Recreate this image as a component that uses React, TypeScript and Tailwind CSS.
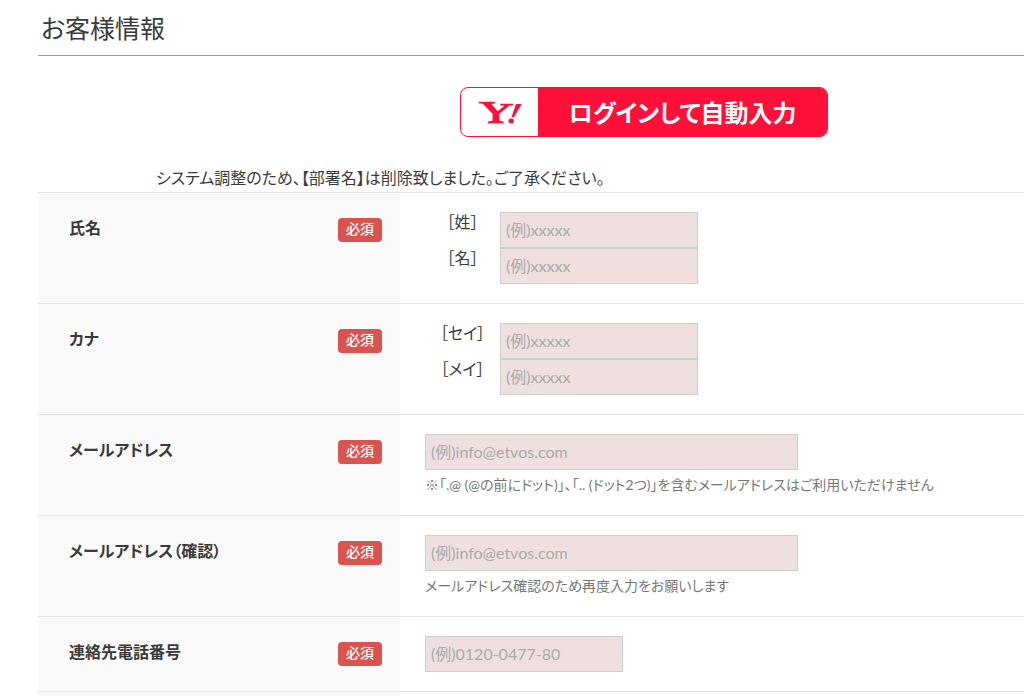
import type { ReactNode } from "react";

const inputClass =
  "block h-9 border border-[#ccc] bg-[#efdfdf] px-[5px] pb-0.5 text-base text-[#333] placeholder:text-[#aaa] outline-none";

function YahooMark() {
  return (
    <svg viewBox="0 0 130 68" className="h-[23px] w-11" fill="currentColor" aria-hidden="true">
      <path d="M2 2H50V7L40 9L58 30L78 14L66 13V8H104V12L92 14L63 38V58L76 61V66H29V61L43 58V38L14 8L2 7Z" />
      <path d="M112 9H129L106 48H99Z" />
      <ellipse cx="98" cy="59" rx="8" ry="7" />
    </svg>
  );
}

function Row({ label, htmlFor, children }: { label: string; htmlFor: string; children: ReactNode }) {
  return (
    <tr className="border-t border-[#e3e3e3]">
      <th scope="row" className="w-[362px] bg-[#f9f9f9] pt-[25px] pr-[18px] pl-[31px] text-left align-top font-bold">
        <div className="flex items-start justify-between">
          <label htmlFor={htmlFor} className="leading-5">
            {label}
          </label>
          <span className="h-6 w-11 rounded bg-[#d9534f] text-center text-sm leading-[22px] font-medium text-white">
            必須
          </span>
        </div>
      </th>
      <td className="py-[19px] pl-[25px] align-top">{children}</td>
    </tr>
  );
}

function NamePart({ id, label }: { id: string; label: string }) {
  return (
    <div className="flex">
      <label htmlFor={id} className="w-[75px] text-center leading-5">
        {label}
      </label>
      <input id={id} type="text" placeholder="(例)xxxxx" className={`${inputClass} w-[198px]`} />
    </div>
  );
}

function EmailField({ id, note }: { id: string; note: string }) {
  return (
    <>
      <input id={id} type="email" placeholder="(例)info@etvos.com" className={`${inputClass} w-[373px]`} />
      <p className="pt-1 text-sm leading-[22px] text-[#777]">{note}</p>
    </>
  );
}

export default function App() {
  return (
    <main className="overflow-hidden bg-white pl-[38px] font-[Lato,'Noto_Sans_CJK_JP',sans-serif] text-base text-[#3a3a3a] [font-feature-settings:'palt']">
      <h1 className="border-b border-[#999] pt-2 pb-[7px] pl-[3px] text-[25px] leading-10">お客様情報</h1>
      <div className="flex pt-[31px] pl-[422px]">
        <button
          type="button"
          aria-label="Yahoo! ログインして自動入力"
          className="flex h-[50px] w-[368px] overflow-hidden rounded-lg border border-[#ff1039] bg-white"
        >
          <span className="flex h-full w-[77px] items-center justify-center text-[#ff1039]">
            <YahooMark />
          </span>
          <span className="flex h-full flex-1 items-center justify-center bg-[#ff1039] pt-0.5 text-2xl font-bold text-white">
            ログインして自動入力
          </span>
        </button>
      </div>
      <p className="pt-[29px] pb-0.5 pl-[118px] leading-6">
        システム調整のため、【部署名】は削除致しました。ご了承ください。
      </p>
      <form>
        <table className="w-full border-collapse">
          <tbody>
            <Row label="氏名" htmlFor="sei">
              <NamePart id="sei" label="［姓］" />
              <NamePart id="mei" label="［名］" />
            </Row>
            <Row label="カナ" htmlFor="sei-kana">
              <NamePart id="sei-kana" label="［セイ］" />
              <NamePart id="mei-kana" label="［メイ］" />
            </Row>
            <Row label="メールアドレス" htmlFor="email">
              <EmailField
                id="email"
                note="※「.@ (@の前にドット)」、「.. (ドット2つ)」を含むメールアドレスはご利用いただけません"
              />
            </Row>
            <Row label="メールアドレス（確認）" htmlFor="email-confirm">
              <EmailField id="email-confirm" note="メールアドレス確認のため再度入力をお願いします" />
            </Row>
            <Row label="連絡先電話番号" htmlFor="tel">
              <input id="tel" type="tel" placeholder="(例)0120-0477-80" className={`${inputClass} w-[198px]`} />
            </Row>
            <tr className="border-t border-[#e3e3e3]">
              <td className="bg-[#f9f9f9] pt-1"></td>
              <td></td>
            </tr>
          </tbody>
        </table>
      </form>
    </main>
  );
}
